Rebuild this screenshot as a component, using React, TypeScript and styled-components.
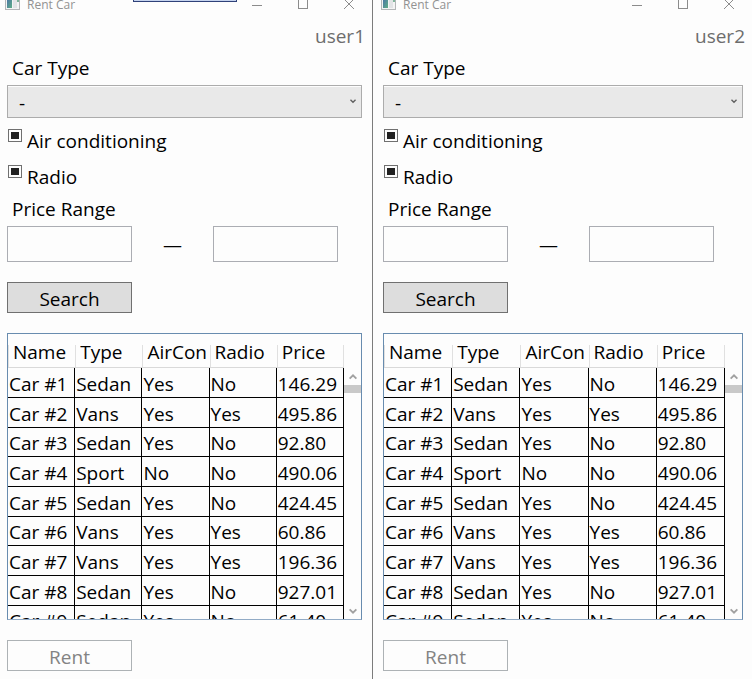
import React from "react";
import styled, { createGlobalStyle } from "styled-components";

const GlobalStyle = createGlobalStyle`
  *, *::before, *::after { box-sizing: border-box; }
  body {
    margin: 0;
    background: #fdfdfd;
    color: #000;
    font-family: "Open Sans", "Noto Sans", sans-serif;
    font-size: 19px;
    line-height: 28px;
  }
  button, input, select { font: inherit; color: inherit; margin: 0; }
`;

const Desktop = styled.main`
  display: grid;
  grid-template-columns: minmax(0, 373fr) minmax(0, 379fr);
  min-height: 100vh;
`;

const Window = styled.section<{ $divided?: boolean }>`
  position: relative;
  padding-left: ${(p) => (p.$divided ? 0 : 3)}px;
  border-right: ${(p) => (p.$divided ? "1px solid #7c7c7c" : "0")};
`;

const BackgroundTab = styled.div`
  position: absolute;
  top: 0;
  left: 133px;
  width: 104px;
  height: 2px;
  background: #c5d3ee;
  border: 1px solid #2f4179;
  border-top: 0;
`;

const TitleBar = styled.header<{ $divided?: boolean }>`
  display: flex;
  align-items: center;
  height: 10px;
  padding-left: 5px;
  padding-right: ${(p) => (p.$divided ? 0 : -1)}px;
  color: #929292;
`;

const Title = styled.h1`
  flex: 1;
  margin: 0 0 0 6px;
  font-size: 12px;
  font-weight: 400;
  line-height: 16px;
`;

const CaptionButton = styled.button`
  display: flex;
  align-items: center;
  justify-content: center;
  width: 46px;
  height: 20px;
  padding: 0;
  border: 0;
  background: none;
`;

const UserName = styled.p`
  margin: 12px 7px 0 0;
  text-align: right;
  color: #6d6d6d;
`;

const Form = styled.form<{ $divided?: boolean }>`
  padding: 0 ${(p) => (p.$divided ? 10 : 9)}px 8px 7px;
`;

const FieldLabel = styled.label`
  display: block;
  margin: 4px 0 3px 5px;
`;

const SelectBox = styled.div`
  position: relative;
  svg {
    position: absolute;
    right: 6px;
    top: 13px;
    pointer-events: none;
  }
`;

const Select = styled.select`
  display: block;
  appearance: none;
  width: 100%;
  height: 33px;
  padding: 3px 20px 0 11px;
  border: 1px solid #acacac;
  border-radius: 0;
  background: #e9e9e9;
  box-shadow: inset 0 1px #fdfdfd;
`;

const CheckList = styled.div`
  display: grid;
  gap: 8px;
  margin-top: 9px;
`;

const CheckLabel = styled.label`
  display: flex;
  align-items: flex-start;
  gap: 5px;
  padding-left: 1px;
`;

const CheckBox = styled.input`
  appearance: none;
  flex: none;
  width: 14px;
  height: 13px;
  && { margin-top: 2px; }
  padding: 2px;
  border: 1px solid #707070;
  background: #fff;
  &:indeterminate {
    background: #212121 content-box;
  }
`;

const RangeGroup = styled.div`
  display: flex;
  align-items: center;
`;

const PriceInput = styled.input`
  width: 125px;
  min-width: 0;
  height: 36px;
  padding: 0 4px;
  border: 1px solid #abadb3;
  border-radius: 0;
  background: #fdfdfd;
`;

const RangeDash = styled.span`
  width: 81px;
  padding-top: 2px;
  text-align: center;
`;

const ActionButton = styled.button`
  display: block;
  width: 125px;
  height: 31px;
  padding: 2px 0 0;
  border: 1px solid #707070;
  background: #dddddd;
  line-height: 26px;
  && { margin-top: 20px; }
  &:disabled {
    border-color: #adb2b5;
    background: #fdfdfd;
    color: #838383;
  }
`;

const DataGrid = styled.div`
  display: flex;
  height: 287px;
  margin-top: 20px;
  border: 1px solid #688caf;
  border-bottom-color: #92abc6;
`;

const Viewport = styled.div`
  flex: 1;
  min-width: 0;
  overflow: hidden;
`;

const Table = styled.table`
  width: 100%;
  table-layout: fixed;
  border-collapse: separate;
  border-spacing: 0;
`;

const dividerLine = "linear-gradient(#e0e0e0, #e0e0e0) no-repeat";

const HeadCell = styled.th`
  height: 34px;
  padding: 0;
  border-bottom: 1px solid #d9d9d9;
  background: ${dividerLine} left bottom / 1px 22px;
  font-weight: 400;
  text-align: left;
  vertical-align: top;
  &:last-child {
    background:
      ${dividerLine} left bottom / 1px 22px,
      ${dividerLine} right bottom / 1px 22px;
  }
`;

const HeadText = styled.div`
  margin: 5px 4px 0 5px;
  line-height: 26px;
  white-space: nowrap;
  overflow: hidden;
`;

const Row = styled.tr`
  height: 30px;
  &:nth-child(3n) { height: 29px; }
`;

const Cell = styled.td`
  padding: 2px 0 0 1px;
  border-right: 1px solid #000;
  border-bottom: 1px solid #000;
  line-height: 26px;
  white-space: nowrap;
`;

const ScrollBar = styled.div`
  display: flex;
  flex-direction: column;
  width: 17px;
  padding-top: 34px;
`;

const ScrollButton = styled.button`
  display: flex;
  align-items: center;
  justify-content: center;
  height: 17px;
  padding: 0;
  border: 0;
  background: none;
`;

const ScrollTrack = styled.div`
  flex: 1;
`;

const ScrollThumb = styled.div`
  height: 8px;
  background: #c9c9c9;
`;

const columns = ["Name", "Type", "AirCon", "Radio", "Price"];

const cars = [
  ["Car #1", "Sedan", "Yes", "No", "146.29"],
  ["Car #2", "Vans", "Yes", "Yes", "495.86"],
  ["Car #3", "Sedan", "Yes", "No", "92.80"],
  ["Car #4", "Sport", "No", "No", "490.06"],
  ["Car #5", "Sedan", "Yes", "No", "424.45"],
  ["Car #6", "Vans", "Yes", "Yes", "60.86"],
  ["Car #7", "Vans", "Yes", "Yes", "196.36"],
  ["Car #8", "Sedan", "Yes", "No", "927.01"],
  ["Car #9", "Sedan", "Yes", "No", "61.40"],
];

function AppIcon() {
  return (
    <svg width="16" height="12" viewBox="0 0 16 12" aria-hidden="true">
      <defs>
        <linearGradient id="pane" x1="0" y1="0" x2="1" y2="1">
          <stop offset="0" stopColor="#4a72a8" />
          <stop offset="1" stopColor="#5fae86" />
        </linearGradient>
      </defs>
      <rect x="0.5" y="-3.5" width="14" height="14" fill="#f4f4f4" stroke="#b4b6b8" />
      <rect x="2" y="-1" width="5" height="10" fill="url(#pane)" />
      <rect x="8" y="-1" width="4" height="10" fill="#e2e4e6" />
      <rect x="12" y="-1" width="2" height="4" fill="#7fb49a" />
    </svg>
  );
}

function Chevron({ up, size, color }: { up?: boolean; size: number; color: string }) {
  return (
    <svg width={size} height={size} viewBox="0 0 8 8" fill="none" stroke={color} strokeWidth="1.9" aria-hidden="true">
      <path d={up ? "M.6 5.7 4 2.3l3.4 3.4" : "M.6 2.3 4 5.7l3.4-3.4"} />
    </svg>
  );
}

function TriStateBox({ id }: { id: string }) {
  const ref = React.useRef<HTMLInputElement>(null);
  React.useLayoutEffect(() => {
    if (ref.current) ref.current.indeterminate = true;
  }, []);
  return <CheckBox type="checkbox" id={id} ref={ref} />;
}

function RentWindow({ user, divided }: { user: string; divided?: boolean }) {
  const id = (name: string) => `${user}-${name}`;
  return (
    <Window $divided={divided}>
      {divided && <BackgroundTab />}
      <TitleBar>
        <AppIcon />
        <Title>Rent Car</Title>
        <CaptionButton aria-label="Minimize">
          <svg width="10" height="11" stroke="#8c8c8c"><path d="M0 5.5h10" /></svg>
        </CaptionButton>
        <CaptionButton aria-label="Maximize">
          <svg width="10" height="12" fill="none" stroke="#8c8c8c"><rect x=".5" y=".5" width="9" height="9" /></svg>
        </CaptionButton>
        <CaptionButton aria-label="Close">
          <svg width="10" height="12" stroke="#8c8c8c"><path d="M0 0l10 10M10 0L0 10" /></svg>
        </CaptionButton>
      </TitleBar>
      <UserName>{user}</UserName>
      <Form $divided={divided} onSubmit={(e) => e.preventDefault()}>
        <FieldLabel htmlFor={id("type")}>Car Type</FieldLabel>
        <SelectBox>
          <Select id={id("type")} defaultValue="-">
            <option>-</option>
            <option>Sedan</option>
            <option>Vans</option>
            <option>Sport</option>
          </Select>
          <Chevron size={6} color="#606060" />
        </SelectBox>
        <CheckList>
          <CheckLabel htmlFor={id("air")}><TriStateBox id={id("air")} />Air conditioning</CheckLabel>
          <CheckLabel htmlFor={id("radio")}><TriStateBox id={id("radio")} />Radio</CheckLabel>
        </CheckList>
        <FieldLabel htmlFor={id("min")}>Price Range</FieldLabel>
        <RangeGroup>
          <PriceInput id={id("min")} />
          <RangeDash>—</RangeDash>
          <PriceInput aria-label="Maximum price" />
        </RangeGroup>
        <ActionButton type="submit">Search</ActionButton>
        <DataGrid>
          <Viewport>
            <Table>
              <thead>
                <tr>
                  {columns.map((c) => (
                    <HeadCell key={c} scope="col"><HeadText>{c}</HeadText></HeadCell>
                  ))}
                </tr>
              </thead>
              <tbody>
                {cars.map((car) => (
                  <Row key={car[0]}>
                    {car.map((value, i) => <Cell key={i}>{value}</Cell>)}
                  </Row>
                ))}
              </tbody>
            </Table>
          </Viewport>
          <ScrollBar>
            <ScrollButton type="button" aria-label="Scroll up"><Chevron up size={8} color="#a0a0a0" /></ScrollButton>
            <ScrollTrack><ScrollThumb /></ScrollTrack>
            <ScrollButton type="button" aria-label="Scroll down"><Chevron size={8} color="#a0a0a0" /></ScrollButton>
          </ScrollBar>
        </DataGrid>
        <ActionButton type="button" disabled>Rent</ActionButton>
      </Form>
    </Window>
  );
}

export default function App() {
  return (
    <>
      <GlobalStyle />
      <Desktop>
        <RentWindow user="user1" divided />
        <RentWindow user="user2" />
      </Desktop>
    </>
  );
}
